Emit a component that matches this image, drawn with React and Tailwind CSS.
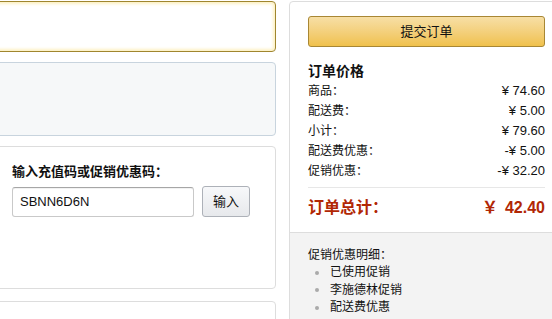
const font = { fontFamily: '"Liberation Sans", "Noto Sans CJK SC", sans-serif' };

const rows = [
  ["商品：", "¥ 74.60"],
  ["配送费：", "¥ 5.00"],
  ["小计：", "¥ 79.60"],
  ["配送费优惠：", "-¥ 5.00"],
  ["促销优惠：", "-¥ 32.20"],
];

const promos = ["已使用促销", "李施德林促销", "配送费优惠"];

export default function App() {
  return (
    <div
      className="w-[552px] h-[319px] overflow-hidden bg-white flex items-start pt-[1px] text-[#111]"
      style={font}
    >
      {/* Left column */}
      <div className="ml-[-10px] w-[286px] shrink-0 flex flex-col">
        <div className="h-[51px] rounded-[4px] border border-[#a0862e] bg-white shadow-[inset_0_0_3px_2px_#fdf1c4]"></div>

        <div className="mt-[10px] h-[74px] rounded-[4px] border border-[#c8d4de] bg-[#f6f8f9]"></div>

        <div className="mt-[10px] h-[143px] rounded-[4px] border border-[#dddddd] bg-white pl-[21px] pt-[16px]">
          <div className="text-[13px] leading-[17px] font-bold">
            输入充值码或促销优惠码：
          </div>
          <div className="mt-[6px] flex items-center gap-[8px]">
            <input
              type="text"
              defaultValue="SBNN6D6N"
              className="w-[182px] h-[30px] rounded-[3px] border border-[#c9c9c9] border-t-[#a6a6a6] px-[7px] text-[13px] text-[#111] outline-none shadow-[inset_0_1px_0_rgba(0,0,0,0.05)]"
              style={font}
            />
            <button
              className="w-[48px] h-[31px] rounded-[3px] border border-[#adb1b8] bg-gradient-to-b from-[#f7f8fa] to-[#e7e9ec] text-[13px] text-[#111]"
              style={font}
            >
              输入
            </button>
          </div>
        </div>

        <div className="mt-[12px] h-[40px] rounded-[4px] border border-[#dddddd] bg-white"></div>
      </div>

      {/* Order summary */}
      <div className="ml-[13px] w-[275px] shrink-0 rounded-[4px] border border-[#dddddd] bg-white overflow-hidden">
        <div className="px-[18px] pt-[14px] pb-[12px]">
          <button
            className="w-full h-[31px] rounded-[3px] border border-[#a88734] bg-gradient-to-b from-[#f7dfa5] to-[#f0c14b] text-[13px] text-[#111]"
            style={font}
          >
            提交订单
          </button>

          <div className="mt-[14px] text-[14px] leading-[20px] font-bold">订单价格</div>

          {rows.map(([label, value]) => (
            <div key={label} className="flex justify-between text-[12px] leading-[20px]">
              <span>{label}</span>
              <span className="text-[13px]">{value}</span>
            </div>
          ))}

          <div className="mt-[6px] h-px bg-[#e7e7e7]"></div>

          <div className="mt-[8px] flex justify-between items-center leading-[24px] text-[16px] font-bold text-[#b12704]">
            <span>订单总计：</span>
            <span>
              <span className="mr-[7px]">￥</span>42.40
            </span>
          </div>
        </div>

        <div className="border-t border-[#dddddd] bg-[#f3f3f3] px-[18px] pt-[13px] pb-[20px] text-[12px]">
          <div className="leading-[18px]">促销优惠明细：</div>
          <ul>
            {promos.map((p) => (
              <li key={p} className="flex items-center leading-[17.5px] pl-[7px]">
                <span className="w-[4px] h-[4px] rounded-full bg-[#aaaaaa] mr-[11px]"></span>
                <span>{p}</span>
              </li>
            ))}
          </ul>
        </div>
      </div>
    </div>
  );
}
